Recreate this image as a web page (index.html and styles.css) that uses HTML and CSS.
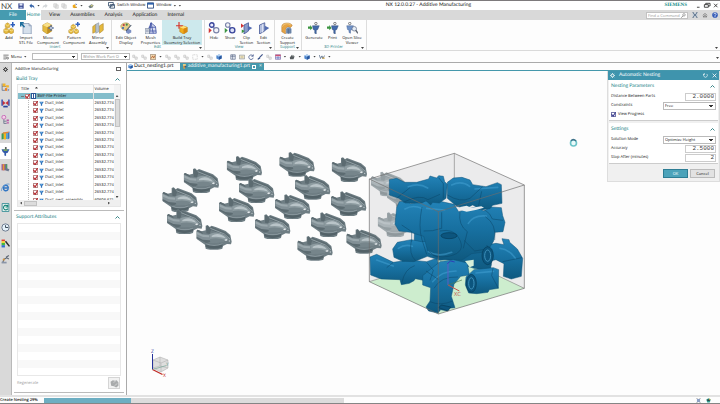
FILE: index.html
```html
<!DOCTYPE html>
<html lang="en">
<head>
<meta charset="utf-8">
<title>NX 12.0.0.27 - Additive Manufacturing</title>
<link rel="stylesheet" href="styles.css">
</head>
<body>
<svg class="defs" aria-hidden="true">
  <symbol id="i-save" viewBox="0 0 16 16"><path d="M1 1h14v14H1z" fill="#33408c"/><path d="M4 1h8v6H4z" fill="#dfe6f5"/><path d="M4 10h8v5H4z" fill="#9fb0d8"/></symbol>
  <symbol id="i-undo" viewBox="0 0 16 16"><path d="M1 7l6-6v4c6 0 8 4 7 10-1-4-3-5-7-5v4z" fill="#3563a8"/></symbol>
  <symbol id="i-redo" viewBox="0 0 16 16"><path d="M15 7L9 1v4c-6 0-8 4-7 10 1-4 3-5 7-5v4z" fill="#d3d6d9"/></symbol>
  <symbol id="i-copy" viewBox="0 0 16 16"><path d="M2 2h8v9H2zM6 5h8v9H6z" fill="#eee" stroke="#c3c3c3" stroke-width="1.5"/></symbol>
  <symbol id="i-spark" viewBox="0 0 16 16"><path d="M2 6l5-3 3 4-3 7-5-2z" fill="#f0a818"/><path d="M9 1l5 2-4 3z" fill="#4d64a8"/><path d="M7 10h6v3H7z" fill="#c78c1c"/></symbol>
  <symbol id="i-touch" viewBox="0 0 16 16"><path d="M1 9l8-6 6 3-3 6-7 2z" fill="#6f7d7e"/><path d="M6 8l6-4v5z" fill="#e9e080"/></symbol>
  <symbol id="i-asm" viewBox="0 0 16 16"><path d="M3 1h9v6l-3 8H5z" fill="#e9a13b"/><path d="M3 1h9v4H3z" fill="#f7e3a0"/><path d="M8 6h6v5H8z" fill="#44597e"/></symbol>
  <symbol id="i-window" viewBox="0 0 16 16"><path d="M1 2h14v12H1z" fill="#fff" stroke="#26457a" stroke-width="2"/><path d="M1 2h14v4H1z" fill="#2d62ad"/></symbol>
  <symbol id="i-note" viewBox="0 0 16 16"><path d="M1 3h14v10H1z" fill="#f1edda" stroke="#777c80" stroke-width="1.500"/><path d="M4 8h8" stroke="#b79b50" stroke-width="2"/></symbol>
  <symbol id="i-switch" viewBox="0 0 16 16"><path d="M1 1h11v8H1zM5 6h10v8H5z" fill="#fff" stroke="#39516e" stroke-width="2"/><path d="M3 14l8-9" stroke="#39516e" stroke-width="2"/></symbol>
  <symbol id="i-add" viewBox="0 0 16 16"><path d="M1 10l3-2 4 2v4l-4 2-3-2zM3 3l3-2 3 2v4L6 8 3 7zM8 10l3-2 3 2v4l-3 2-3-2z" fill="#e5b93c" stroke="#a98226" stroke-width=".6"/><path d="M1 10l3 2 4-2M3 3l3 2 3-2M8 10l3 2 3-2" fill="none" stroke="#fae9a5"/><path d="M13 0v7M10 3.500h6" stroke="#2f5fbd" stroke-width="2"/></symbol>
  <symbol id="i-import" viewBox="0 0 16 16"><path d="M4 2h8l3 3v11H4z" fill="#d5dfeb" stroke="#8497b3"/><path d="M12 2v3h3" fill="none" stroke="#8497b3"/><path d="M1 6V1h4M1 1l5 6" fill="none" stroke="#1d6d9c" stroke-width="2"/></symbol>
  <symbol id="i-move" viewBox="0 0 16 16"><path d="M1 4l6-3 6 3v8l-6 4-6-4z" fill="#e3b93e" stroke="#a67f20" stroke-width=".6"/><path d="M1 4l6 3 6-3L7 1z" fill="#f8e08a"/><path d="M7 7v9l6-4V4z" fill="#c08f24"/><path d="M8 8h8M12 4v8" stroke="#506a9c" stroke-width="1.500"/><circle cx="12" cy="8" r="1.800" fill="#fff" stroke="#506a9c"/></symbol>
  <symbol id="i-pattern" viewBox="0 0 16 16"><path d="M1 11l3-2 3 2v3l-3 2-3-2zM8 11l3-2 3 2v3l-3 2-3-2zM4 5l3-2 3 2v3L7 10 4 8z" fill="#e5b93c" stroke="#a98226" stroke-width=".6"/><path d="M13 0v6M10 3h6" stroke="#3867bd" stroke-width="2"/><path d="M1 11l3 2 3-2M8 11l3 2 3-2M4 5l3 2 3-2" stroke="#fae9a5" fill="none"/></symbol>
  <symbol id="i-mirror" viewBox="0 0 16 16"><path d="M1 6l4-3v10l-4 2zM10 5l5-3v9l-5 4z" fill="#e5b93c" stroke="#a67f20" stroke-width=".7"/><path d="M5 3l4-2v12l-4 2z" fill="#b7c3cf" stroke="#7f8c9b" stroke-width=".7"/></symbol>
  <symbol id="i-palette" viewBox="0 0 16 16"><path d="M1 5c2-5 11-5 12-1 1 3-3 3-3 5 0 3-9 3-9-4z" fill="#e4ce88" stroke="#a98b45" stroke-width=".7"/><circle cx="5" cy="4" r="1.400" fill="#bd3545"/><circle cx="9" cy="3.500" r="1.400" fill="#438649"/><circle cx="4" cy="8" r="1.400" fill="#3568b8"/><path d="M8 11l3-2 4 2v3l-4 2-3-2z" fill="#7d91c4"/><path d="M15 4L8 12" stroke="#485568" stroke-width="1.400"/></symbol>
  <symbol id="i-mesh" viewBox="0 0 16 16"><path d="M8 1l6 5 1 9H3z" fill="#d6dcf2" stroke="#36489f"/><path d="M8 1L6 15M8 1l3 14M5 7h9M3 12h12" stroke="#36489f" fill="none"/><path d="M0 9h6v7H0z" fill="#eef1f6" stroke="#6a7892"/><path d="M1 11h4M1 13h4" stroke="#7f89a5"/></symbol>
  <symbol id="i-tray" viewBox="0 0 16 16"><path d="M5 7l4-2 6 2v6l-5 3-5-3z" fill="#f1ad1b" stroke="#ad6d0b" stroke-width=".6"/><path d="M5 7l5 2 5-2-6-2z" fill="#ffe179"/><path d="M4 0v9M0 5h9" stroke="#d6332a" stroke-width="1.500"/><path d="M10 9v7l5-3V7z" fill="#d88710"/></symbol>
  <symbol id="i-hide" viewBox="0 0 16 16"><circle cx="5" cy="4" r="3" fill="#eef" stroke="#39459b" stroke-width="1.800"/><path d="M7 7l3 3" stroke="#6e78b6" stroke-width="2"/><circle cx="11" cy="11" r="3.500" fill="#f4f4fa" stroke="#7a83a9" stroke-width="1.500"/><path d="M1 8l4 3-4 4z" fill="#cf3332"/></symbol>
  <symbol id="i-show" viewBox="0 0 16 16"><circle cx="5" cy="4" r="3" fill="#f4f4fa" stroke="#7a83a9" stroke-width="1.500"/><path d="M7 7l3 3" stroke="#6e78b6" stroke-width="2"/><circle cx="11" cy="11" r="3.500" fill="#dde2f8" stroke="#39459b" stroke-width="1.800"/><path d="M1 8l4 3-4 4z" fill="#3b9440"/></symbol>
  <symbol id="i-clip" viewBox="0 0 16 16"><path d="M4 4l6-3v11l-6 4z" fill="#8c9dcb" stroke="#3e5291"/><path d="M9 5l6 3-6 4z" fill="#536cb1"/><path d="M0 2l4 3-4 3z" fill="#cf3332"/><path d="M1 10l4 2-4 3z" fill="#3b9440"/></symbol>
  <symbol id="i-section" viewBox="0 0 16 16"><path d="M2 4l7-3v11l-7 4z" fill="#b3bfdf" stroke="#3e5291"/><path d="M6 3v11" stroke="#e8ecf8"/><path d="M9 5l6 3-6 4z" fill="#536cb1"/></symbol>
  <symbol id="i-support" viewBox="0 0 16 16"><path d="M1 13V6c0-6 13-6 14-1l-3 3c-2-3-6-1-6 3v5z" fill="#e5a344" stroke="#a9732c" stroke-width=".6"/><path d="M7 10c0-4 5-4 7-1v6H7z" fill="#7b93b5"/><path d="M8 9v7M10 9v7M12 9v7" stroke="#435f85" stroke-width=".8"/><path d="M2 6c1-4 8-5 11-2" stroke="#f9d894" fill="none"/></symbol>
  <symbol id="i-print" viewBox="0 0 16 16"><path d="M6 5h9l-2 5-2 1v5l-2-1v-4L7 10z" fill="#426aab" stroke="#2d4777" stroke-width=".6"/><circle cx="10.500" cy="2" r="1.600" fill="#fff" stroke="#58595e"/><path d="M0 6h3V4l3 4-3 3V9H0z" fill="#3b9440"/></symbol>
  <symbol id="i-viewer" viewBox="0 0 16 16"><path d="M1 5h9L8 10l-2 1v4l-2-1v-3l-2-1z" fill="#6e91c7" stroke="#3f5c91" stroke-width=".6"/><circle cx="5" cy="2" r="1.600" fill="#fff" stroke="#58595e"/><circle cx="11" cy="9" r="3" fill="#e6edf6" stroke="#64728d"/><path d="M13 11l3 4" stroke="#5b626e" stroke-width="1.800"/></symbol>
  <symbol id="i-cube" viewBox="0 0 16 16"><path d="M1 4l7-3 7 3v8l-7 3-7-3z" fill="#4f86cc"/><path d="M1 4l7 3 7-3-7-3z" fill="#b1d0f2"/><path d="M8 7v8l7-3V4z" fill="#29579d"/></symbol>
  <symbol id="i-ghost" viewBox="0 0 16 16"><path d="M2 3h5v5h7v6H8V9H2z" fill="#ececec" stroke="#bbb" stroke-width="1.500"/></symbol>
  <symbol id="i-dotbox" viewBox="0 0 16 16"><path d="M2 2h12v12H2z" fill="none" stroke="#aaa" stroke-width="1.500" stroke-dasharray="2"/></symbol>
  <symbol id="i-pick" viewBox="0 0 16 16"><path d="M1 1h14v14H1z" fill="#f5ddb4" stroke="#7b6755" stroke-width="1.500"/><path d="M3 12l4-7 3 6 3-7" stroke="#a85527" fill="none" stroke-width="2"/></symbol>
  <symbol id="i-gridwin" viewBox="0 0 16 16"><path d="M2 2h12v12H2zM2 6h12M7 2v12" fill="#e8ebf2" stroke="#4f6080" stroke-width="1.600"/></symbol>
  <symbol id="i-rotate" viewBox="0 0 16 16"><path d="M13 5a6 6 0 1 0 1 5M14 1v5H9" fill="none" stroke="#3c5187" stroke-width="2"/></symbol>
  <symbol id="i-brush" viewBox="0 0 16 16"><path d="M15 1L7 9" stroke="#3c5187" stroke-width="3"/><path d="M7 8l2 3-6 4-2-2z" fill="#25417e"/></symbol>
  <symbol id="i-color" viewBox="0 0 16 16"><path d="M1 2h14v12H1z" fill="#fff" stroke="#5c4390" stroke-width="1.500"/><path d="M1 2h14v4H1z" fill="#d05173"/><path d="M6 6v8M10 6v8M1 10h14" stroke="#5064bb" stroke-width="1.500"/></symbol>
  <symbol id="i-solid" viewBox="0 0 16 16"><path d="M2 9l6-7 2 3 5 1-3 8H3z" fill="#555b5e"/><path d="M9 2l5 2-4 4z" fill="#9a9f9d"/></symbol>
  <symbol id="i-measure" viewBox="0 0 16 16"><path d="M1 3l3 9 4-7 2 7 5-8" stroke="#4a6280" stroke-width="2" fill="none"/><path d="M9 11h6" stroke="#c79830" stroke-width="3"/></symbol>
  <symbol id="i-gear" viewBox="0 0 16 16"><circle cx="8" cy="8" r="4.500" fill="none" stroke="currentColor" stroke-width="2.500"/><path d="M8 0v4M8 12v4M0 8h4M12 8h4M2.500 2.500l2 2M11.500 11.500l2 2M13.500 2.500l-2 2M4.500 11.500l-2 2" stroke="currentColor" stroke-width="2"/></symbol>
  <symbol id="i-nav" viewBox="0 0 16 16"><path d="M2 1v12h5M2 6h7" fill="none" stroke="#69778e" stroke-width="1.500"/><path d="M3 1h5v5H3zM9 4h5v4H9z" fill="#f1b32a"/><path d="M7 9h4v5H7z" fill="#e6852d"/><path d="M12 10l3 2-3 3z" fill="#7588b9"/></symbol>
  <symbol id="i-constraint" viewBox="0 0 16 16"><path d="M2 1v11M14 1v11" stroke="#2547b5" stroke-width="2.500"/><path d="M3 3l5 4-5 4zM13 3L8 7l5 4z" fill="#c93138"/><path d="M4 12h8v3H4z" fill="#29449c"/></symbol>
  <symbol id="i-part" viewBox="0 0 16 16"><circle cx="5" cy="4" r="3.500" fill="#f3d2e9" stroke="#bf52ab" stroke-width="1.300"/><path d="M5 8v7h5M5 11h5" stroke="#6b758c" stroke-width="1.500" fill="none"/><path d="M10 8h4v3h-4zM10 13h4v2h-4z" fill="#ba55a7"/></symbol>
  <symbol id="i-library" viewBox="0 0 16 16"><path d="M1 5l4-3v12l-4 1z" fill="#3d9b58"/><path d="M5 3h4v12H5z" fill="#f3b51d"/><path d="M9 2h3v12H9z" fill="#4d9fd0"/><path d="M12 3l3-2v12l-3 2z" fill="#3a78bf"/><path d="M1 5l4-3 10-1-3 3z" fill="#e2843b"/></symbol>
  <symbol id="i-printer" viewBox="0 0 16 16"><path d="M1 4h14l-3 6-3 1v5l-3-1v-4l-3-2z" fill="#345caa"/><path d="M4 4h8l-1 3H5z" fill="#7ba75a"/><path d="M7 0h3v4H7z" fill="#59605f"/></symbol>
  <symbol id="i-books" viewBox="0 0 16 16"><path d="M1 2h10v11H1z" fill="#924ea0"/><path d="M3 2h3v11H3z" fill="#e79b30"/><path d="M8 2h3v11H8z" fill="#4a9c64"/><path d="M9 9l6 2-2 4-4-2z" fill="#6a7690"/></symbol>
  <symbol id="i-ie" viewBox="0 0 16 16"><path d="M13 11c-3 5-9 3-9-2 0-6 9-7 9 0H5" fill="none" stroke="#3276c3" stroke-width="2.600"/><path d="M1 14C-1 9 8 0 15 2" fill="none" stroke="#6199d2" stroke-width="1.500"/></symbol>
  <symbol id="i-recycle" viewBox="0 0 16 16"><path d="M2 1h12v14H2z" fill="#edf5f1" stroke="#2c8792" stroke-width="1.500"/><path d="M11 5a4 4 0 1 0 1 5M12 3v4H8" fill="none" stroke="#168479" stroke-width="2"/></symbol>
  <symbol id="i-clock" viewBox="0 0 16 16"><circle cx="8" cy="8" r="6.500" fill="#e5f1fa" stroke="#647286" stroke-width="1.600"/><path d="M8 4v4h5" stroke="#384553" stroke-width="1.700" fill="none"/></symbol>
  <symbol id="i-rainbow" viewBox="0 0 16 16"><path d="M1 1h6v3H1z" fill="#e33c2c"/><path d="M1 4h6v3H1z" fill="#f8da2b"/><path d="M1 7h6v4H1z" fill="#45b83e"/><path d="M1 11h6v4H1z" fill="#3070cd"/><path d="M8 4l7 9" stroke="#292929" stroke-width="2.500"/></symbol>
  <symbol id="i-robot" viewBox="0 0 16 16"><path d="M3 14l2-6 5-3 4 2M9 4l5-3" stroke="#5c6673" stroke-width="2" fill="none"/><path d="M1 12h9v3H1z" fill="#8a95a8"/><circle cx="5" cy="8" r="2" fill="#d29643"/></symbol>
  <symbol id="i-funnel" viewBox="0 0 16 16"><path d="M1 2h14l-3 6-2 1v6H6V9L4 8z" fill="#2e71b9"/><path d="M4 3h7L9 7H6z" fill="#63a5df"/></symbol>
  <symbol id="i-chevron" viewBox="0 0 10 6"><path d="M1 5l4-4 4 4" fill="none" stroke="#22777a" stroke-width="1.800"/></symbol>
  <symbol id="i-search" viewBox="0 0 16 16"><circle cx="9.500" cy="6" r="4" fill="none" stroke="#555" stroke-width="1.500"/><path d="M6.500 9L1 15" stroke="#555" stroke-width="2"/></symbol>
  <symbol id="duct" viewBox="0 0 108 76">
    <path d="M0 20l4-4 12 5 12-3V4l6-2 6 6 6-4 14 5 28 11 14 12 4 20-2 8-12-1-12 6-2 8q-26 10-50 0l-2-12L0 43z" fill="#6f7e84"/>
    <path d="M30 6l4-2 6 7 6-4 40 16 14 12v6L84 34 62 24 44 17l-4 12-10-2z" fill="#5c6b71"/>
    <path d="M42 12l42 17 17 15" fill="none" stroke="#93a1a6" stroke-width="3"/>
    <path d="M34 34q14-12 34-9 18 4 28 20l-14 6q-24 6-48 0z" fill="#8d9ba0"/>
    <path d="M46 34q14-8 28-3 10 4 14 11-20-7-42-4z" fill="#b9c4c8"/>
    <path d="M38 44q26-6 50 3l-10 6q-22 5-40 2z" fill="#76858b"/>
    <path d="M28 56v12q24 11 50 0l1-12q-24 8-51 0z" fill="#536268"/>
    <path d="M28 56q26 9 51 0v4q-26 10-51 0z" fill="#86949a"/>
    <path d="M1 20l18 9 21 2 2 22-12 4L1 42z" fill="#829096"/>
    <path d="M2 23l17 8 19 2v6l-18-1L2 30z" fill="#9ba8ad"/>
    <path d="M1 37l18 9 22 2 1 5-12 4L1 42zM0 20l4-4 13 6 3 7z" fill="#5c6b71"/>
    <path d="M84 47l6-3 4 3-5 3z" fill="#e4e9eb"/><circle cx="99" cy="50" r="2" fill="#c6cfd3"/>
  </symbol>
</svg>

<header class="titlebar">
  <span class="brand">NX</span>
  <div class="quick">
    <svg><use href="#i-save"/></svg><svg class="gap"><use href="#i-undo"/></svg><i class="drop"></i><svg><use href="#i-redo"/></svg><svg class="gap"><use href="#i-copy"/></svg><svg><use href="#i-copy"/></svg><svg class="gap"><use href="#i-spark"/></svg><i class="drop"></i><svg class="gap"><use href="#i-touch"/></svg>
  </div>
  <div class="windows">
    <svg><use href="#i-switch"/></svg><span>Switch Window</span><svg><use href="#i-window"/></svg><span>Window</span><i class="drop"></i><i class="drop"></i>
  </div>
  <h1>NX 12.0.0.27 - Additive Manufacturing</h1>
  <div class="corner">
    <strong>SIEMENS</strong>
    <svg viewBox="0 0 50 16"><path d="M2 12h6M19 6h9v6h-9zM22 6V3h10v6h-4M41 4l8 8M49 4l-8 8" fill="none" stroke="#333" stroke-width="2"/></svg>
  </div>
</header>

<nav class="menubar">
  <a class="file" href="#">File</a><a class="active" href="#">Home</a><a href="#">View</a><a href="#">Assemblies</a><a href="#">Analysis</a><a href="#">Application</a><a href="#">Internal</a>
  <div class="finder">
    <label class="find"><input type="text" placeholder="Find a Command" aria-label="Find a Command"><svg><use href="#i-search"/></svg></label>
    <svg viewBox="0 0 16 16"><path d="M2 2h12v12H2z" fill="#b9c4d1"/><path d="M3 3l10 10M13 3L3 13M1 1h4M11 1h4M1 15h4M11 15h4" stroke="#35516d" stroke-width="1.600"/></svg>
    <svg viewBox="0 0 16 16"><path d="M2 9l6-5 6 5M3 13l5-4 5 4z" fill="none" stroke="#555" stroke-width="1.600"/></svg>
    <svg viewBox="0 0 16 16"><circle cx="8" cy="8" r="7.500" fill="#3159b7"/><path d="M5 6c0-4 6-4 6 0 0 2-3 2-3 4v3" fill="none" stroke="#fff" stroke-width="2"/></svg>
  </div>
</nav>

<section class="ribbon" aria-label="Home tools">
  <div class="group insert"><div class="tools">
    <button><svg><use href="#i-add"/></svg>Add</button>
    <button><svg><use href="#i-import"/></svg>Import<br>STL File</button>
    <button><svg><use href="#i-move"/></svg>Move<br>Component</button>
    <button><svg><use href="#i-pattern"/></svg>Pattern<br>Component</button>
    <button><svg><use href="#i-mirror"/></svg>Mirror<br>Assembly</button>
  </div><h2>Insert</h2><i class="drop"></i></div>
  <div class="group edit"><div class="tools">
    <button><svg><use href="#i-palette"/></svg>Edit Object<br>Display</button>
    <button><svg><use href="#i-mesh"/></svg>Mesh<br>Properties</button>
    <button class="on"><svg><use href="#i-tray"/></svg>Build Tray<br>Geometry Selection</button>
  </div><h2>Edit</h2><i class="drop"></i></div>
  <div class="group view"><div class="tools">
    <button><svg><use href="#i-hide"/></svg>Hide</button>
    <button><svg><use href="#i-show"/></svg>Show</button>
    <button><svg><use href="#i-clip"/></svg>Clip<br>Section</button>
    <button><svg><use href="#i-section"/></svg>Edit<br>Section</button>
  </div><h2>View</h2><i class="drop"></i></div>
  <div class="group support"><div class="tools">
    <button><svg><use href="#i-support"/></svg>Create<br>Support</button>
  </div><h2>Support</h2><i class="drop"></i></div>
  <div class="group printer"><div class="tools">
    <button><svg><use href="#i-print"/></svg>Generate</button>
    <button><svg><use href="#i-print"/></svg>Print</button>
    <button><svg><use href="#i-viewer"/></svg>Open Slice<br>Viewer</button>
  </div><h2>3D Printer</h2><i class="drop"></i></div>
  <i class="drop last"></i>
</section>

<section class="toolbar" aria-label="Selection tools">
  <button class="menu"><svg viewBox="0 0 16 16"><path d="M1 3h14M1 8h9M1 13h7" stroke="#555" stroke-width="2"/><circle cx="12" cy="11" r="3" fill="#bbb" stroke="#444"/></svg>Menu<i class="drop"></i></button>
  <select class="filter" aria-label="Type filter"><option></option></select>
  <select class="scope" aria-label="Selection scope"><option>Within Work Part O</option></select>
  <div class="strip">
    <svg><use href="#i-ghost"/></svg><svg><use href="#i-ghost"/></svg><svg><use href="#i-pick"/></svg><i class="drop"></i><svg><use href="#i-ghost"/></svg><svg><use href="#i-ghost"/></svg><svg><use href="#i-ghost"/></svg><svg><use href="#i-dotbox"/></svg><i class="drop"></i><svg><use href="#i-ghost"/></svg><svg><use href="#i-cube"/></svg>
  </div>
  <div class="strip second">
    <svg><use href="#i-gridwin"/></svg><svg><use href="#i-note"/></svg><svg><use href="#i-rotate"/></svg><svg><use href="#i-brush"/></svg><svg><use href="#i-ghost"/></svg><svg><use href="#i-color"/></svg><i class="drop"></i><svg><use href="#i-solid"/></svg><i class="drop"></i><svg><use href="#i-cube"/></svg><i class="drop"></i><svg><use href="#i-measure"/></svg><i class="drop"></i>
  </div>
  <i class="drop last"></i>
</section>

<main>
  <nav class="rail" aria-label="Resource bar">
    <button aria-label="Options" class="roomy"><svg><use href="#i-gear"/></svg></button>
    <button aria-label="Assembly Navigator"><svg><use href="#i-nav"/></svg></button>
    <button aria-label="Constraint Navigator"><svg><use href="#i-constraint"/></svg></button>
    <button aria-label="Part Navigator"><svg><use href="#i-part"/></svg></button>
    <button aria-label="Reuse Library"><svg><use href="#i-library"/></svg></button>
    <button aria-label="Additive Manufacturing" class="on"><svg><use href="#i-printer"/></svg></button>
    <button aria-label="HD3D Tools" class="roomy"><svg><use href="#i-books"/></svg></button>
    <button aria-label="Web Browser" class="roomy"><svg><use href="#i-ie"/></svg></button>
    <button aria-label="History" class="roomy"><svg><use href="#i-recycle"/></svg></button>
    <button aria-label="Recent"><svg><use href="#i-clock"/></svg></button>
    <button aria-label="Materials"><svg><use href="#i-rainbow"/></svg></button>
    <button aria-label="Roles"><svg><use href="#i-robot"/></svg></button>
  </nav>

  <aside class="panel">
    <div class="panel-title"><h2>Additive Manufacturing</h2><i class="pin"></i></div>
    <section>
      <div class="section-title"><h3>Build Tray</h3><svg><use href="#i-chevron"/></svg></div>
      <div class="tree">
        <div class="tree-view">
          <table>
            <thead><tr><th>Title <i class="sort"></i></th><th>Volume</th></tr></thead>
            <tbody>
              <tr class="root"><td><span class="node"><i class="minus"></i><input type="checkbox" checked aria-label="3MF-File Printer"><i class="badge"></i>3MF-File Printer</span></td><td></td></tr>
              <tr><td><span class="leaf"><input type="checkbox" checked aria-label="Duct_Inlet 1"><svg><use href="#i-funnel"/></svg>Duct_Inlet</span></td><td>26532.774</td></tr>
              <tr><td><span class="leaf"><input type="checkbox" checked aria-label="Duct_Inlet 2"><svg><use href="#i-funnel"/></svg>Duct_Inlet</span></td><td>26532.774</td></tr>
              <tr><td><span class="leaf"><input type="checkbox" checked aria-label="Duct_Inlet 3"><svg><use href="#i-funnel"/></svg>Duct_Inlet</span></td><td>26532.774</td></tr>
              <tr><td><span class="leaf"><input type="checkbox" checked aria-label="Duct_Inlet 4"><svg><use href="#i-funnel"/></svg>Duct_Inlet</span></td><td>26532.774</td></tr>
              <tr><td><span class="leaf"><input type="checkbox" checked aria-label="Duct_Inlet 5"><svg><use href="#i-funnel"/></svg>Duct_Inlet</span></td><td>26532.774</td></tr>
              <tr><td><span class="leaf"><input type="checkbox" checked aria-label="Duct_Inlet 6"><svg><use href="#i-funnel"/></svg>Duct_Inlet</span></td><td>26532.774</td></tr>
              <tr><td><span class="leaf"><input type="checkbox" checked aria-label="Duct_Inlet 7"><svg><use href="#i-funnel"/></svg>Duct_Inlet</span></td><td>26532.774</td></tr>
              <tr><td><span class="leaf"><input type="checkbox" checked aria-label="Duct_Inlet 8"><svg><use href="#i-funnel"/></svg>Duct_Inlet</span></td><td>26532.774</td></tr>
              <tr><td><span class="leaf"><input type="checkbox" checked aria-label="Duct_Inlet 9"><svg><use href="#i-funnel"/></svg>Duct_Inlet</span></td><td>26532.774</td></tr>
              <tr><td><span class="leaf"><input type="checkbox" checked aria-label="Duct_Inlet 10"><svg><use href="#i-funnel"/></svg>Duct_Inlet</span></td><td>26532.774</td></tr>
              <tr><td><span class="leaf"><input type="checkbox" checked aria-label="Duct_Inlet 11"><svg><use href="#i-funnel"/></svg>Duct_Inlet</span></td><td>26532.774</td></tr>
              <tr><td><span class="leaf"><input type="checkbox" checked aria-label="Duct_Inlet 12"><svg><use href="#i-funnel"/></svg>Duct_Inlet</span></td><td>26532.774</td></tr>
              <tr><td><span class="leaf"><input type="checkbox" checked aria-label="Duct_Inlet 13"><svg><use href="#i-funnel"/></svg>Duct_Inlet</span></td><td>26532.774</td></tr>
              <tr><td><span class="leaf"><input type="checkbox" checked aria-label="Duct assembly"><svg><use href="#i-funnel"/></svg>Duct_nest_assembly</span></td><td>60606.671</td></tr>
            </tbody>
          </table>
        </div>
        <div class="vbar"><i class="up"></i><i class="thumb"></i><i class="drop"></i></div>
        <div class="hbar"><i class="left"></i><i class="thumb"></i><i class="right"></i></div>
      </div>
    </section>
    <section class="attributes">
      <div class="section-title"><h3>Support Attributes</h3><svg><use href="#i-chevron"/></svg></div>
      <div class="list"></div>
      <div class="regen"><span>Regenerate</span><button aria-label="Regenerate"><svg viewBox="0 0 16 16"><path d="M1 5l4-3 4 1 3-1 3 4v6l-4 3-4-2-5-1z" fill="#a9abac"/><path d="M6 6l4-2M8 12l5-4" stroke="#d2d3d4" stroke-width="1.500"/></svg></button></div>
    </section>
  </aside>

  <section class="stage">
    <nav class="tabs">
      <a href="#"><svg><use href="#i-cube"/></svg>Duct_nesting1.prt</a>
      <a href="#" class="active"><svg><use href="#i-asm"/></svg>additive_manufacturing1.prt<i class="box"></i><span>×</span></a>
    </nav>
    <div class="canvas">
      <svg class="scene" viewBox="127 71 593 324" preserveAspectRatio="xMinYMin meet" role="img" aria-label="Build tray with nested ducts">
        <defs>
          <linearGradient id="blue" x1="0" y1="0" x2="0" y2="1"><stop offset="0" stop-color="#2383b8"/><stop offset=".5" stop-color="#176f9f"/><stop offset="1" stop-color="#0f597f"/></linearGradient>
        </defs>
        <g transform="translate(360 145) scale(.33333)">
          <path d="M283 25L28 102v308l207 97 258-77V120z" fill="#ebebec"/>
          <path d="M283 330L28 410l207 97 258-77z" fill="#cdedce"/>
          <path d="M283 25v305M28 410l255-80 210 100" fill="none" stroke="#858585" stroke-width="2"/>
        </g>
        <g transform="translate(155 145) scale(.33333)">
          <use href="#duct" x="215" y="31" width="108" height="76"/><use href="#duct" x="373" y="19" width="108" height="76"/><use href="#duct" x="530" y="35" width="108" height="76"/>
          <use href="#duct" x="86" y="68" width="108" height="76"/><use href="#duct" x="22" y="125" width="108" height="76"/><use href="#duct" x="252" y="98" width="108" height="76"/><use href="#duct" x="420" y="88" width="108" height="76"/>
          <use href="#duct" x="192" y="155" width="108" height="76"/><use href="#duct" x="360" y="146" width="108" height="76"/><use href="#duct" x="528" y="137" width="108" height="76"/>
          <use href="#duct" x="36" y="191" width="108" height="76"/><use href="#duct" x="124" y="238" width="108" height="76"/><use href="#duct" x="300" y="206" width="108" height="76"/><use href="#duct" x="468" y="200" width="108" height="76"/>
          <use href="#duct" x="574" y="250" width="108" height="76"/><use href="#duct" x="427" y="271" width="108" height="76"/>
          <g opacity=".6"><use href="#duct" x="648" y="78" width="108" height="76"/><use href="#duct" x="696" y="115" width="108" height="76"/><use href="#duct" x="668" y="200" width="108" height="76"/></g>
        </g>
        <g transform="translate(360 145) scale(.33333)">
          <g fill="url(#blue)" stroke="#0d5077" stroke-width="1.500">
            <path d="M165 200l225 10 6 90-4 80-50-10-60-20-120-40z"/>
            <path d="M380 300l28-5 24 4-6-18 21 3 2 8 23 20 16 28-4 54-30 8-24-8 2-38-24-12-28 6z"/>
            <path d="M30 336l20-8 50 24 50-7 50 5 30-10 10 30-40 12-10 24-24-5-4 6-14 8-24 4-4-15-56-2-32-12z"/>
            <path d="M98 312l14-20 42-8 30 6 60-4 62 6 6 26-16 22-56 6-38-12-40 16-34-1-26-12z"/>
            <path d="M110 188l8-18 22-2 12 8 40-8 44 0 46 10 14 22 50-14 26 12 20-12 32 2 4 24 7 20-6 28-24 2-4 26-20 32-46 6-30 20-62-4-38-18-14-50-40-12-34-4-12-20z"/>
            <path d="M262 112l18-13 26-2 24 8 8 14 40 6 34-12 12 6 2 56-28 6-8 10-24 3-28-14-20 10-28-6-28-24z"/>
            <path d="M88 104l22-4 24 12h36l36-10 4-9 20 6 6-7 14 2 4 16 8 8-4 42-20 14-20-2-6 8-14-13-12 7-50 0-20-14-28-10z"/>
            <path d="M188 392l52-42 40-6 42 10 6 36-26 4-20 24-8 36 11 34-19 2-4 8-20-4-8 10-28-6-8-12 12-18 2-40-24-8z"/>
            <path d="M318 396l24-22 58-6 16 6-1 56-27 4-4 8-34 4-24-2-10-24z"/>
          </g>
          <g fill="none" stroke="#45a3d5" stroke-width="5" opacity=".5" stroke-linecap="round">
            <path d="M145 125q32-12 58 4M275 120q30-14 54 4M345 132l68-5M135 192q24-14 50-2M325 235q16-26 54-22M205 320q30 18 70 2M115 310q20-14 42-6M420 310q26 2 46 30M218 410q26-32 70-32M348 384l52-5M50 345l50 18M200 190l54 5"/>
          </g>
          <g fill="none" stroke="#0a4567" stroke-width="2" opacity=".75">
            <path d="M110 160l40-32M130 172q50-26 74-8l36-16M236 98l14 18v44M262 150q40 24 68 10l38-35M355 185l10-46M186 186q-12 60 0 98l14 44M245 202v48q-28 10-54 8M300 200q-6 40 22 60l-12 50M345 192q40-4 52 30l32 4M376 215q34 22 28 70M154 286q-8 42 12 60M240 258q40-8 56 20 26 44-30 56-40 8-60-16M312 286l32 32 48-8M380 300q20 30 14 62M428 350l58-12M125 240l30 20v30M80 368l20-16M126 412q8-40 38-50M200 352l20 24-10 30M210 470q32 14 68-2M222 430q20-36 72-34M415 430l-20-38 4-22M198 378l38 26"/>
          </g>
          <path d="M300 186l20-4 14 6 30-4 8 4-22 6-30 6-16-4z" fill="#e6ecee"/>
          <g fill="#0c557e" stroke="#063b58" stroke-width="2"><ellipse cx="334" cy="415" rx="15" ry="27"/><ellipse cx="383" cy="332" rx="17" ry="27"/><ellipse cx="267" cy="272" rx="24" ry="9"/><path d="M236 488l8-8 28 6-8 12z"/></g>
          <g fill="none" stroke="#3e91bb" stroke-width="3"><ellipse cx="334" cy="415" rx="8" ry="17"/><ellipse cx="383" cy="332" rx="9" ry="17"/></g>
          <path d="M315 348l26-4v18l-12 5z" fill="#d7efd9"/>
          <path d="M28 102l207 98 258-80M235 200v307M28 102v308l207 97 258-77V120L283 25z" fill="none" stroke="#6c6c6c" stroke-width="2"/>
          <path d="M264 354v66" stroke="#5c5fc5" stroke-width="3"/><path d="M264 420l34 18" stroke="#c8524b" stroke-width="3"/><path d="M264 420l42-15" stroke="#4f7a54" stroke-width="2"/><path d="M262 356l10-8 12 3" fill="none" stroke="#2d3fb8" stroke-width="3"/>
          <text x="282" y="453" class="axis-big">XC</text>
        </g>
        <g>
          <path d="M153 360l7-3 8 3v8l-7 4-8-4z" fill="#dedede" stroke="#a9a9a9" stroke-width=".5"/><path d="M153 360l8 3 7-3M161 363v9M160 357v9l8 2M160 366l-7 2" fill="none" stroke="#aaa" stroke-width=".5"/>
          <path d="M152.500 369.500V354" stroke="#26329a"/><path d="M152.500 369.500l10 5" stroke="#c02c27" stroke-width="1.300"/><path d="M152.500 369.500l14-4" stroke="#75a596" stroke-width=".7"/>
          <text x="151" y="353" class="axis z">Z</text><text x="163" y="377" class="axis x">X</text><text x="166" y="366" class="axis y">Y</text>
        </g>
        <circle cx="573.500" cy="143" r="3" fill="#eafafa" stroke="#6cc3c8" stroke-width="1.600"/><path d="M571 141q2-3 5 0" fill="none" stroke="#426f87" stroke-width="1.300"/>
      </svg>
      <form class="dialog">
        <div class="dialog-title"><svg><use href="#i-gear"/></svg><h2>Automatic Nesting</h2><svg viewBox="0 0 16 16"><path d="M4 3a6 6 0 1 0 8 0M4 0v5H0" fill="none" stroke="#fff" stroke-width="2"/></svg><svg viewBox="0 0 16 16"><path d="M2 2l12 12M14 2L2 14" stroke="#fff" stroke-width="2.500"/></svg></div>
        <fieldset>
          <div class="section-title"><h3>Nesting Parameters</h3><svg><use href="#i-chevron"/></svg></div>
          <div class="row"><label for="distance">Distance Between Parts</label><input id="distance" type="text" value="2.0000"></div>
          <div class="row"><label for="constraints">Constraints</label><select id="constraints"><option>Free</option></select></div>
          <div class="row"><label class="check"><input type="checkbox" checked>View Progress</label></div>
        </fieldset>
        <fieldset>
          <div class="section-title"><h3>Settings</h3><svg><use href="#i-chevron"/></svg></div>
          <div class="row"><label for="mode">Solution Mode</label><select id="mode"><option>Optimize Height</option></select></div>
          <div class="row"><label for="accuracy">Accuracy</label><input id="accuracy" type="text" value="2.5000"></div>
          <div class="row"><label for="stop">Stop After (minutes)</label><input id="stop" type="text" value="2"></div>
        </fieldset>
        <div class="actions"><button type="button" class="ok">OK</button><button type="button">Cancel</button></div>
      </form>
    </div>
  </section>
</main>

<footer class="status">
  <label for="progress">Create Nesting 29%</label>
  <progress id="progress" max="100" value="29"></progress>
  <svg viewBox="0 0 16 16"><path d="M3 3h10v10H3z" fill="#8da0c4"/><path d="M1 1h4M11 1h4M1 15h4M11 15h4" stroke="#777" stroke-width="2"/></svg>
  <svg viewBox="0 0 16 16"><path d="M1 5l7-4 7 4-3 9H4z" fill="#2f9c8f"/><path d="M4 5h8v4H4z" fill="#30323a"/><path d="M10 1l5 4-4 2z" fill="#d9b13a"/></svg>
</footer>
</body>
</html>
```
FILE: styles.css
```css
* { box-sizing: border-box; margin: 0; padding: 0; }
html, body { height: 100%; }
body {
  display: flex; flex-direction: column; overflow: hidden;
  font: 4px/5px "Open Sans", "Noto Sans", sans-serif; color: #111; background: #fdfdfd;
  text-rendering: geometricPrecision;
}
button, input, select { font: inherit; color: inherit; border: 0; background: none; border-radius: 0; appearance: none; }
a { color: inherit; text-decoration: none; }
h1, h2, h3 { font-size: inherit; font-weight: 400; }
svg { display: block; width: 7px; height: 7px; flex: none; }
fieldset { border: 0; min-width: 0; }
.defs { position: absolute; width: 0; height: 0; }
.drop { flex: none; width: 3px; height: 2px; background: #444; clip-path: polygon(0 0, 100% 0, 50% 100%); }
.titlebar h1, .menubar, h3, .tabs, .dialog-title { font: 5px/5px Lato, "Open Sans", sans-serif; }

/* Title bar */
.titlebar { flex: none; height: 10px; display: flex; align-items: center; position: relative; border-top: 1px solid #7d7a7c; background: #fff; }
.brand { width: 18px; padding-left: 1px; font: 8px/8px Lato, sans-serif; color: #444; }
.quick { display: flex; align-items: center; gap: 2px; width: 90px; }
.quick svg { width: 6px; height: 6px; }
.quick .gap { margin-left: 3px; }
.windows { display: flex; align-items: center; gap: 2px; }
.titlebar h1 { position: absolute; left: 0; right: 0; padding-left: 137px; text-align: center; pointer-events: none; }
.corner { margin-left: auto; display: flex; align-items: center; gap: 8px; padding-right: 1px; }
.corner strong { font: 700 5px/5px "Liberation Serif", serif; color: #168b87; }
.corner svg { width: 24px; height: 7px; }

/* Menu */
.menubar { flex: none; height: 10px; display: flex; align-items: center; background: #d9d9d9; }
.menubar a { height: 10px; line-height: 10px; padding: 0 5px; }
.menubar .file { width: 26px; padding: 0; text-align: center; background: #469bb0; color: #fff; }
.menubar .active { width: 15px; margin-right: 3px; padding: 0; text-align: center; background: #fff; color: #237f86; }
.finder { margin-left: auto; display: flex; align-items: center; gap: 4px; padding-right: 2px; }
.finder svg { width: 6px; height: 6px; }
.find { display: flex; align-items: center; width: 42px; height: 7px; padding: 0 1px; border: 1px solid #c2c2c2; background: #fff; }
.find input { flex: 1; min-width: 0; height: 5px; font: 4px/5px "Open Sans", sans-serif; }
.find input::placeholder { color: #999; opacity: 1; }
.find svg { width: 5px; height: 5px; }

/* Ribbon */
.ribbon { flex: none; height: 31px; position: relative; display: flex; background: #fdfdfd; border-bottom: 1px solid #dadada; }
.group { position: relative; display: flex; flex-direction: column; justify-content: space-between; padding: 0 2px 0 1px; border-right: 1px solid #ddd; }
.group h2 { text-align: center; color: #237f86; line-height: 5px; }
.group .drop, .ribbon .last { position: absolute; right: 2px; bottom: 1px; }
.tools { display: grid; }
.insert .tools { grid-template-columns: 16px 18px 26px 26px 22px; }
.edit .tools { grid-template-columns: 26px 23px 40px; }
.view .tools { grid-template-columns: 16px 16px 17px 17px; }
.support .tools { grid-template-columns: 23px; }
.printer .tools { grid-template-columns: 22px 15px 24px; }
.tools button { height: 25px; padding-top: 2px; display: grid; justify-items: center; justify-content: center; align-content: start; white-space: nowrap; text-align: center; }
.tools button svg { width: 12px; height: 12px; margin-bottom: 1px; }
.tools .on { background: #cde9ed; }

/* Selection toolbar */
.toolbar { flex: none; height: 12px; position: relative; display: flex; align-items: center; background: #fdfdfd; border-bottom: 1px solid #aaa; padding-left: 3px; }
.toolbar .last { position: absolute; right: 1px; bottom: 3px; }
.menu { display: flex; align-items: center; gap: 2px; width: 29px; }
.menu svg { width: 6px; height: 6px; }
select { border: 1px solid #bbb; height: 7px; padding-left: 1px; background: conic-gradient(from -45deg at 50% 100%, #333 0 90deg, transparent 0) right 2px center / 4px 2px no-repeat #fff; }
.filter { width: 46px; }
.scope { width: 49px; margin-left: 3px; color: #888; }
.strip { display: flex; align-items: center; justify-content: space-between; width: 90px; margin-left: 2px; }
.strip svg { width: 6px; height: 6px; }
.second { width: 101px; margin-left: 8px; }

/* Workspace */
main { flex: 1; min-height: 0; display: grid; grid-template-columns: 12px 115px minmax(0, 1fr); }
.rail { background: #d9d9d9; border-right: 1px solid #b9b9b9; display: flex; flex-direction: column; }
.rail button { height: 16px; display: grid; place-items: center; }
.rail svg { width: 9px; height: 9px; }
.rail .roomy { margin-bottom: 4px; }
.rail button:first-child { height: 12px; }
.rail button:first-child svg { width: 5px; height: 5px; }
.rail .on { background: #fff; }

.panel { display: flex; flex-direction: column; background: #fff; border-right: 1px solid #aaa; }
.panel-title, .section-title { display: flex; align-items: center; justify-content: space-between; }
.panel-title { height: 12px; padding: 0 5px 0 3px; }
.pin { width: 5px; height: 4px; border: 1px solid #666; }
.section-title { color: #237f86; }
.section-title svg { width: 5px; height: 3px; }
.panel section { margin: 0 2px; }
.panel .section-title { height: 9px; padding: 0 4px 0 2px; }
.tree { height: 123px; margin: 0 3px; display: grid; grid-template-columns: minmax(0, 1fr) 6px; grid-template-rows: 115px 6px; border: 1px solid #e6e6e6; }
.tree-view { overflow: hidden; }
table { width: 100%; height: 119px; border-collapse: collapse; table-layout: fixed; }
th, td { padding: 0; overflow: hidden; white-space: nowrap; vertical-align: middle; line-height: 5px; }
th { text-align: left; font-weight: 400; padding-left: 3px; background: #fbfbfb; height: 8px; }
th:last-child, td:last-child { width: 21px; padding-left: 1px; border-left: 1px solid #e1e1e1; }
.root td { background: #83bdcb; }
.node, .leaf { display: flex; align-items: center; gap: 1px; }
.leaf { margin-left: 10px; padding-left: 4px; border-left: 1px dotted #bbb; height: 7px; }
.node { padding-left: 3px; }
.leaf svg { width: 5px; height: 5px; }
.minus { width: 3px; height: 1px; background: #777; }
.badge { width: 5px; height: 6px; border: 1px solid #2c5696; background: linear-gradient(90deg, #fff 1px, #2c5696 1px 2px, #fff 2px); }
.sort { display: inline-block; width: 3px; height: 2px; margin: 0 0 1px 5px; background: #444; clip-path: polygon(50% 0, 100% 100%, 0 100%); }
input[type=checkbox] { flex: none; width: 5px; height: 5px; border: 1px solid #b98c8c; background: #fff; }
input[type=checkbox]::before { content: ""; display: block; width: 5px; height: 5px; margin: -1px; background: #b51e25; clip-path: polygon(0 50%, 20% 40%, 40% 65%, 85% 0, 100% 10%, 45% 100%); }
.vbar { display: flex; flex-direction: column; align-items: center; justify-content: space-between; padding: 10px 0 2px; background: #f4f4f4; }
.vbar .thumb { width: 5px; height: 28px; margin: 2px 0 auto; border: 1px solid #c2c2c2; background: #dcdcdc; }
.up { width: 3px; height: 2px; background: #555; clip-path: polygon(50% 0, 100% 100%, 0 100%); }
.hbar { grid-column: 1 / -1; display: flex; align-items: center; padding: 0 10px 0 2px; background: #efefef; }
.hbar .thumb { width: 13px; height: 5px; margin: 0 auto 0 2px; border: 1px solid #c2c2c2; background: #dcdcdc; }
.left, .right { width: 2px; height: 3px; background: #555; clip-path: polygon(0 50%, 100% 0, 100% 100%); }
.right { clip-path: polygon(0 0, 100% 50%, 0 100%); }
.panel .attributes { flex: 1; display: flex; flex-direction: column; margin-top: 3px; margin-bottom: 2px; border-top: 1px solid #bbb; border-bottom: 1px solid #bbb; padding-bottom: 2px; }
.attributes .section-title { height: 12px; }
.list { flex: 1; margin: 0 3px; border: 1px solid #e8e8e8; background: repeating-linear-gradient(#fff 0 8px, #f8f8f8 8px 16px); }
.regen { height: 14px; display: flex; align-items: center; justify-content: space-between; padding: 0 4px 0 3px; color: #999; }
.regen button { width: 12px; height: 12px; display: grid; place-items: center; border: 1px solid #d5d5d5; background: #f2f2f2; }
.regen svg { width: 9px; height: 9px; }

/* Graphics window */
.stage { min-width: 0; display: flex; flex-direction: column; }
.tabs { flex: none; height: 8px; display: flex; align-items: end; padding-left: 1px; border-bottom: 1px solid #4598ac; }
.tabs a { display: flex; align-items: center; gap: 1px; height: 7px; width: 52px; }
.tabs svg { width: 5px; height: 5px; }
.tabs .active { width: auto; padding: 0 2px; background: #4598ac; color: #fff; }
.box { width: 4px; height: 4px; margin: 0 2px 0 1px; border: 1px solid #fff; }
.canvas { flex: 1; min-height: 0; position: relative; background: #fdfdfd; }
.scene { width: 100%; height: 100%; }
.axis-big { font-size: 17px; fill: #c65a50; }
.axis { font-size: 5px; }
.z { fill: #26329a; }
.x { fill: #c02c27; }
.y { fill: #75a596; }

/* Dialog */
.dialog { position: absolute; top: 0; right: 0; width: 113px; padding-bottom: 3px; background: #f0f0f0; border: 1px solid #ddd; border-top: 0; }
.dialog-title { display: flex; align-items: center; gap: 4px; height: 9px; padding: 0 2px; background: #3f94ad; color: #fff; }
.dialog-title h2 { flex: 1; }
.dialog-title svg { width: 5px; height: 5px; }
.dialog fieldset { margin: 0 1px 2px; padding: 0 2px 1px; background: #fff; border-bottom: 1px solid #ccc; }
.dialog .section-title { height: 12px; padding-right: 1px; }
.row { display: flex; align-items: center; justify-content: space-between; height: 9px; }
.row input[type=text] { width: 31px; height: 8px; padding-right: 1px; border: 1px solid #ccc; background: #fff; text-align: right; color: #444; font: 6px/6px "Liberation Mono", monospace; }
.row select { width: 53px; height: 8px; }
.check { display: flex; align-items: center; gap: 2px; }
.check input[type=checkbox] { border-color: #7778a8; }
.check input[type=checkbox]::before { background: #393c91; }
.actions { display: flex; justify-content: flex-end; gap: 2px; padding: 3px 4px 0; }
.actions button { width: 25px; height: 9px; border: 1px solid #bbb; background: #e2e2e2; }
.actions .ok { border-color: #2d7d94; background: #4ca3ba; color: #fff; }

/* Status line */
.status { flex: none; height: 9px; display: flex; align-items: center; gap: 5px; padding-right: 9px; border-top: 2px solid #e2e2e2; border-bottom: 1px solid #858585; background: #fdfdfd; font-weight: 600; }
.status label { width: 39px; white-space: nowrap; }
.status svg { width: 5px; height: 5px; }
progress { appearance: none; width: 300px; height: 5px; margin-right: auto; border: 0; background: #dcdcdc; }
progress::-webkit-progress-bar { background: #dcdcdc; }
progress::-webkit-progress-value { background: #6daec2; }
```
